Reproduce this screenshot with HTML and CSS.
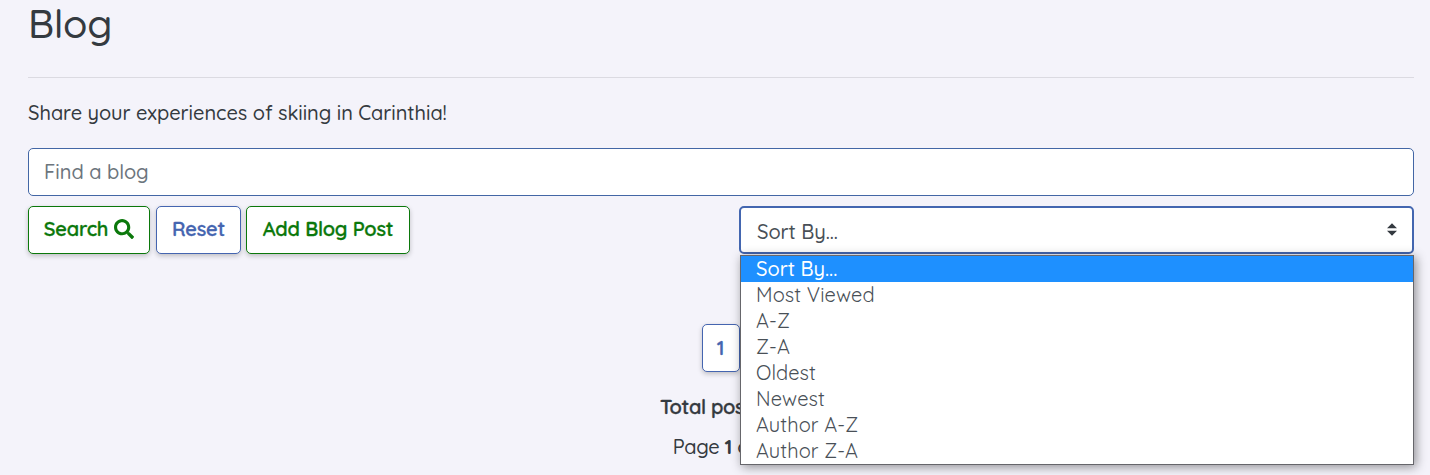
FILE: index.html
```html
<!DOCTYPE html>
<html lang="en">
<head>
<meta charset="utf-8">
<title>Blog</title>
<link rel="stylesheet" href="styles.css">
</head>
<body>
<main class="page">
  <h1 class="title">Blog</h1>
  <hr class="rule">
  <p class="intro">Share your experiences of skiing in Carinthia!</p>
  <input class="search" type="text" placeholder="Find a blog">
  <div class="toolbar">
    <button class="btn green btn-search"><span>Search</span><svg class="icon" viewBox="0 0 512 512"><path fill="currentColor" d="M505 442.700 405.300 343c-4.500-4.500-10.600-7-17-7H372c27.600-35.300 44-79.700 44-128C416 93.100 322.900 0 208 0S0 93.100 0 208s93.100 208 208 208c48.300 0 92.700-16.400 128-44v16.300c0 6.400 2.500 12.500 7 17l99.700 99.700c9.400 9.400 24.600 9.400 33.900 0l28.300-28.300c9.400-9.400 9.400-24.600.1-34zM208 336c-70.700 0-128-57.200-128-128 0-70.700 57.200-128 128-128 70.700 0 128 57.200 128 128 0 70.700-57.200 128-128 128z"/></svg></button>
    <button class="btn blue btn-reset">Reset</button>
    <button class="btn green btn-add">Add Blog Post</button>
    <div class="sort">
      <div class="select"><span>Sort By...</span><svg class="caret" viewBox="0 0 4 5"><path fill="#343a40" d="M2 0 0 2h4zm0 5L0 3h4z"/></svg></div>
      <ul class="menu">
        <li class="selected">Sort By...</li>
        <li>Most Viewed</li>
        <li>A-Z</li>
        <li>Z-A</li>
        <li>Oldest</li>
        <li>Newest</li>
        <li>Author A-Z</li>
        <li>Author Z-A</li>
      </ul>
    </div>
  </div>
  <footer class="pager">
    <button class="btn blue btn-page">1</button>
    <p class="total">Total posts: 5</p>
    <p class="count">Page <b>1</b> of <b>1</b></p>
  </footer>
</main>
</body>
</html>
```
FILE: styles.css
```css
* { box-sizing: border-box; }
body {
  margin: 0;
  height: 475px;
  overflow: hidden;
  background: #f4f3fa;
  color: #343a40;
  font: 500 20px/30px Quicksand, Lato, sans-serif;
  letter-spacing: -0.04px;
}
.page { padding: 0 16px 0 28px; }
.title { margin: 0; height: 77px; font-size: 40px; font-weight: 500; line-height: 46px; letter-spacing: -0.2px; }
.rule { margin: 0; border: 0; border-top: 1px solid #dbdae1; }
.intro { margin: 20px 0; }
.search {
  display: block;
  width: 100%;
  height: 48px;
  padding: 0 15px 2px;
  border: 1px solid #4366a5;
  border-radius: 5px;
  background: #fff;
  font: inherit;
}
.search::placeholder { color: #6c757d; opacity: 1; }
.toolbar { display: flex; margin-top: 10px; }
.btn {
  display: flex;
  align-items: center;
  justify-content: center;
  height: 48px;
  padding: 0 0 2px;
  border: 1px solid;
  border-radius: 5px;
  background: #fff;
  box-shadow: 0 2px 5px rgba(0, 0, 0, .22);
  font: inherit;
  font-weight: 650;
  letter-spacing: -0.2px;
  -webkit-text-stroke: 0.3px;
}
.green { color: #0b780b; }
.blue { color: #4565b0; }
.btn-search { width: 122px; gap: 6px; }
.btn-reset { width: 85px; margin-left: 6px; }
.btn-add { width: 164px; margin-left: 5px; }
.icon { width: 20px; height: 20px; }
.sort { position: relative; width: 675px; margin-left: auto; color: #495057; }
.select {
  display: flex;
  align-items: center;
  justify-content: space-between;
  height: 48px;
  padding: 3px 15px 0 16px;
  border: 2px solid #4366b0;
  border-radius: 5px;
  background: #fff;
}
.caret { width: 10px; height: 13px; margin-bottom: 5px; }
.menu {
  position: absolute;
  top: 49px;
  left: 1px;
  width: 674px;
  height: 210px;
  margin: 0;
  padding: 0;
  border: 1px solid #66666b;
  background: #fff;
  box-shadow: 2px 2px 10px rgba(0, 0, 0, .42);
  list-style: none;
  font-weight: 400;
  letter-spacing: 0.1px;
  line-height: 26px;
}
.menu li { height: 26px; padding-left: 15px; }
.menu .selected { background: #1e90ff; color: #fff; font-weight: 500; letter-spacing: 0; }
.pager { display: flex; flex-direction: column; align-items: center; margin-top: 70px; }
.btn-page { width: 38px; padding: 0 1px 0 0; }
.total { margin: 20px 0 10px; font-weight: 650; letter-spacing: -0.35px; -webkit-text-stroke: 0.3px; }
.count { margin: 0; letter-spacing: -0.3px; }
```
